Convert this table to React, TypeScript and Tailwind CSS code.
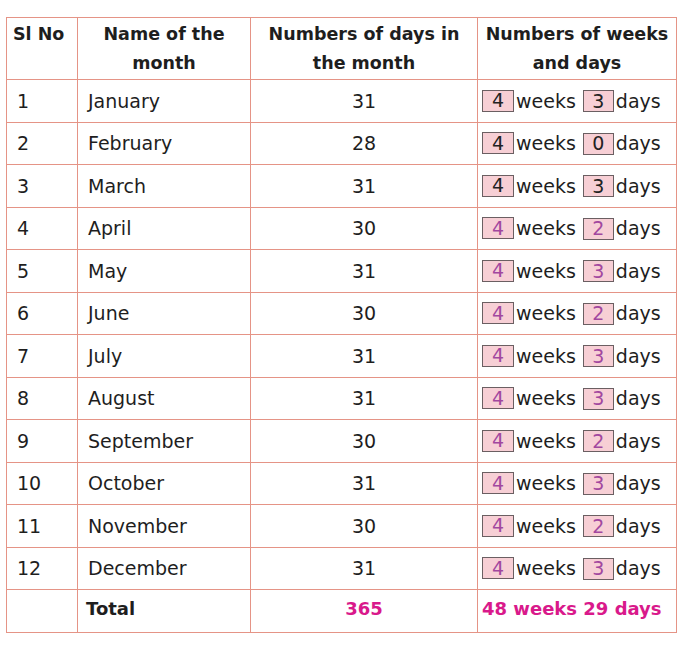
import React from 'react';

const rows = [
  { n: 1, month: 'January', days: 31, w: 4, d: 3, tone: 'dark' },
  { n: 2, month: 'February', days: 28, w: 4, d: 0, tone: 'dark' },
  { n: 3, month: 'March', days: 31, w: 4, d: 3, tone: 'dark' },
  { n: 4, month: 'April', days: 30, w: 4, d: 2, tone: 'purple' },
  { n: 5, month: 'May', days: 31, w: 4, d: 3, tone: 'purple' },
  { n: 6, month: 'June', days: 30, w: 4, d: 2, tone: 'purple' },
  { n: 7, month: 'July', days: 31, w: 4, d: 3, tone: 'purple' },
  { n: 8, month: 'August', days: 31, w: 4, d: 3, tone: 'purple' },
  { n: 9, month: 'September', days: 30, w: 4, d: 2, tone: 'purple' },
  { n: 10, month: 'October', days: 31, w: 4, d: 3, tone: 'purple' },
  { n: 11, month: 'November', days: 30, w: 4, d: 2, tone: 'purple' },
  { n: 12, month: 'December', days: 31, w: 4, d: 3, tone: 'purple' },
];

const Box: React.FC<{ value: number; tone: string; width: string }> = ({ value, tone, width }) => (
  <span
    className={`inline-flex h-[22px] items-center justify-center border border-[#6b5f62] bg-[#f7cfd5] leading-none ${width} ${
      tone === 'purple' ? 'text-[#a2479f]' : 'text-[#222]'
    }`}
  >
    {value}
  </span>
);

const cell = 'border border-[#e59486] h-[42.5px] align-middle';
const head = 'border border-[#e59486] h-[62px] align-top pt-[2px] whitespace-nowrap';

export default function App() {
  return (
    <div className="bg-white w-[686px] h-[646px] pt-[17px] pl-[6px] font-['Comic_Sans_MS','DejaVu_Sans',sans-serif] text-[19px] text-[#1e1e1e]">
      <table className="border-collapse table-fixed w-[670px]">
        <colgroup>
          <col className="w-[71px]" />
          <col className="w-[173px]" />
          <col className="w-[227px]" />
          <col className="w-[199px]" />
        </colgroup>
        <thead>
          <tr className="font-bold leading-[29px] text-[17.5px]">
            <th className={`${head} px-[6px] text-left`}>Sl No</th>
            <th className={`${head} text-center`}>
              Name of the
              <br />
              month
            </th>
            <th className={`${head} text-center`}>
              Numbers of days in
              <br />
              the month
            </th>
            <th className={`${head} text-center`}>
              Numbers of weeks
              <br />
              and days
            </th>
          </tr>
        </thead>
        <tbody>
          {rows.map((r) => (
            <tr key={r.n}>
              <td className={`${cell} pl-[10px]`}>{r.n}</td>
              <td className={`${cell} pl-[10px]`}>{r.month}</td>
              <td className={`${cell} text-center`}>{r.days}</td>
              <td className={`${cell} pl-[4px]`}>
                <div className="flex items-center whitespace-nowrap">
                  <Box value={r.w} tone={r.tone} width="w-[32px]" />
                  <span className="ml-[2px]">weeks</span>
                  <span className="ml-[7px]">
                    <Box value={r.d} tone={r.tone} width="w-[31px]" />
                  </span>
                  <span className="ml-[2px]">days</span>
                </div>
              </td>
            </tr>
          ))}
          <tr className="font-bold text-[18px]">
            <td className={cell}></td>
            <td className={`${cell} pl-[8px] pb-[4px]`}>Total</td>
            <td className={`${cell} text-center pb-[4px] text-[#d9198b]`}>365</td>
            <td className={`${cell} pl-[4px] pb-[4px] text-[#d9198b] whitespace-nowrap`}>48 weeks 29 days</td>
          </tr>
        </tbody>
      </table>
    </div>
  );
}
